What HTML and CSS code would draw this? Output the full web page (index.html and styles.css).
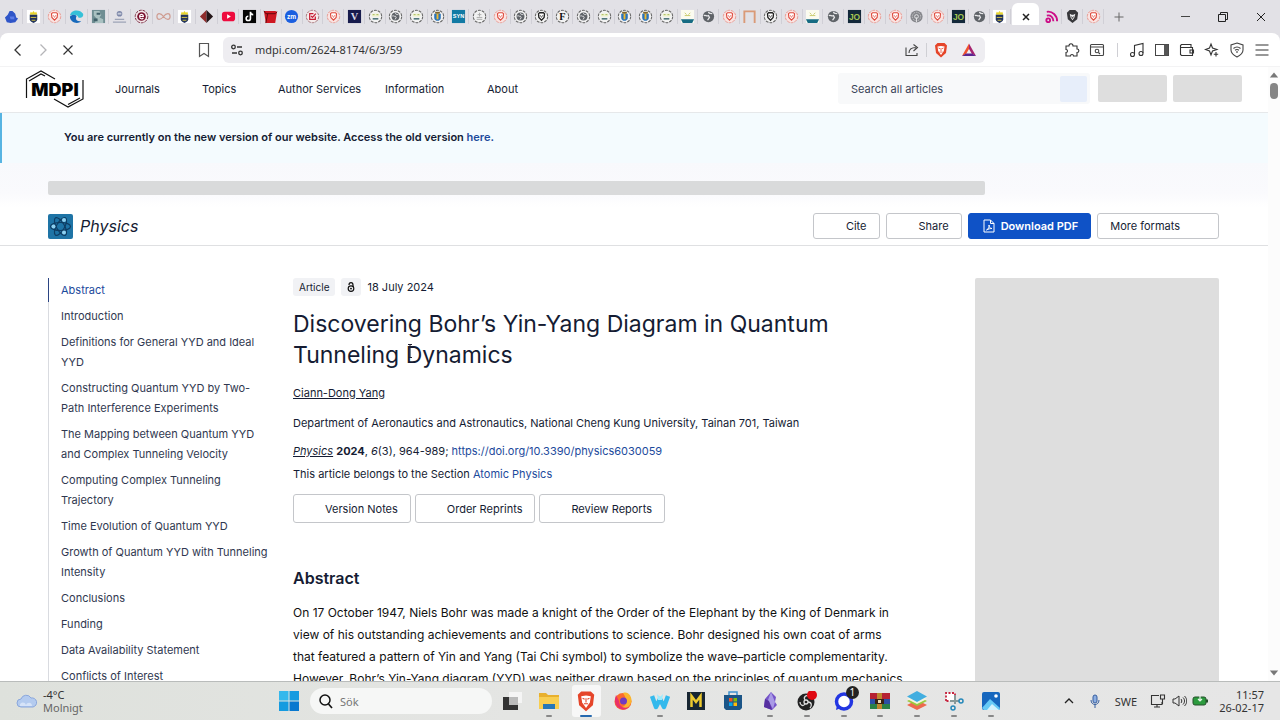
FILE: index.html
```html
<!DOCTYPE html>
<html lang="en">
<head>
  <meta charset="UTF-8">
  <meta name="viewport" content="width=device-width, initial-scale=1.0">
  <title>Discovering Bohr’s Yin-Yang Diagram in Quantum Tunneling Dynamics</title>
  <link rel="stylesheet" href="styles.css">
</head>
<body>
  <!-- Shared icons, 16x16 grid -->
  <svg class="sprite" aria-hidden="true">
    <symbol id="ring" viewBox="0 0 16 16"><circle cx="8" cy="8" r="6.6" fill="#f2f2f2" stroke="#666" stroke-width="1.1" stroke-dasharray="3 1.1"/></symbol>
    <symbol id="blob" viewBox="0 0 16 16"><path d="M1 9l3-3 2-4 3 0 3 3 1 4 2 1-3 4-5 1-4-1z" fill="#2f55c8"/><path d="M6 8h5v3H7z" fill="#5b7be6"/></symbol>
    <symbol id="police" viewBox="0 0 16 16"><path fill="#fff" d="M1 1h14v14H1z"/><path d="M4 6l1-3 1.500 1L8 2l1.500 2L11 3l1 3z" fill="#e8d52c"/><path d="M4 6h8v5c0 2-2 3-4 4-2-1-4-2-4-4z" fill="#23345c"/><path d="M5 9h6M6 12h4" stroke="#d5c443"/></symbol>
    <symbol id="lion-red" viewBox="0 0 16 16"><circle cx="8" cy="8" r="6.600" fill="#fae4e2" stroke="#e9958d" stroke-dasharray="3 1"/><path d="M4.800 5l1.200-1h4l1.200 1-.4 4L8 12 5.200 9z" fill="#fff" stroke="#df4b3e" stroke-width="1.200"/><path d="M6.500 6.500L8 9l1.500-2.500" fill="none" stroke="#df4b3e" stroke-width=".7"/></symbol>
    <symbol id="lion-black" viewBox="0 0 16 16"><use href="#ring"/><path d="M4.800 5l1.200-1h4l1.200 1-.4 4L8 12 5.200 9z" fill="#fff" stroke="#222" stroke-width="1.400"/><path d="M6.500 6.500L8 9l1.500-2.500" fill="none" stroke="#222" stroke-width=".7"/></symbol>
    <symbol id="wave" viewBox="0 0 16 16"><path d="M1 7C2 0 12 0 15 5c1 4-3 5-5 4 0-2-4-4-9-2z" fill="#35c1d8"/><path d="M1 8c3-3 7-2 7 0-2 3 1 6 5 5-4 4-12 1-12-5z" fill="#1769bb"/></symbol>
    <symbol id="portrait" viewBox="0 0 16 16"><path fill="#6f8e93" d="M1 1h14v14H1z"/><path d="M3 2h6l2 4-2 3 4 2v4H4l2-5-3-3z" fill="#a9c1c1"/><path d="M6 4h4v2H6zM3 10h4v3H3z" fill="#3f5f68"/></symbol>
    <symbol id="crest" viewBox="0 0 16 16"><circle cx="8" cy="5" r="3" fill="#7c86a8"/><path d="M6 4h4v2H6z" fill="#c5cad8"/><path d="M3 11h10M1 14h14" stroke="#9da4b7" stroke-width="1.200"/></symbol>
    <symbol id="e-ring" viewBox="0 0 16 16"><circle cx="8" cy="8" r="6.700" fill="#f3e7e9" stroke="#74223a" stroke-dasharray="3 1"/><circle cx="8" cy="8" r="4.600" fill="#7b1230"/><path d="M6 8h4c0-3-4-3-4 0s3 3 4 1.500" fill="none" stroke="#fff" stroke-width="1.200"/></symbol>
    <symbol id="loop" viewBox="0 0 16 16"><path d="M8 8C5 4 1 4 1 8s4 4 7 0 7-4 7 0-4 4-7 0z" fill="none" stroke="#cf9c91" stroke-width="1.300"/></symbol>
    <symbol id="diamond" viewBox="0 0 16 16"><path d="M8 1v14L1 8z" fill="#8f2c2c"/><path d="M8 1l7 7-7 7z" fill="#231518"/></symbol>
    <symbol id="play" viewBox="0 0 16 16"><rect x="1" y="3" width="14" height="10" rx="3" fill="#ee0b3e"/><path d="M6.500 5.500v5l4-2.500z" fill="#fff"/></symbol>
    <symbol id="note" viewBox="0 0 16 16"><path fill="#050505" d="M1 1h14v14H1z"/><path d="M9 3v7a2.300 2.300 0 1 1-2.300-2.300M9 3c0 2 1 3 3 3" fill="none" stroke="#fff" stroke-width="1.700"/></symbol>
    <symbol id="book" viewBox="0 0 16 16"><path d="M1 2h12l2 1-2 12H3z" fill="#cf1722"/><path d="M1 2l2 3h10l2-2M5 5L3 15" fill="none" stroke="#5e070c"/></symbol>
    <symbol id="zm" viewBox="0 0 16 16"><circle cx="8" cy="8" r="7" fill="#1b5fe0"/><text x="8" y="10.500" class="glyph glyph-s" fill="#fff">zm</text></symbol>
    <symbol id="check" viewBox="0 0 16 16"><circle cx="8" cy="8" r="6.600" fill="#f6ecec" stroke="#a06b70" stroke-dasharray="3 1"/><path d="M11 8v3H5V5h4M6.500 7.500L8 9l3.500-4" fill="none" stroke="#c81d33" stroke-width="1.300"/></symbol>
    <symbol id="v" viewBox="0 0 16 16"><path fill="#171b4d" d="M1 1h14v14H1z"/><text x="8" y="12" class="glyph glyph-serif" fill="#d9dae8">V</text></symbol>
    <symbol id="smile" viewBox="0 0 16 16"><use href="#ring"/><path d="M4 5h8v3H4z" fill="#edf3c8"/><path d="M5 6h2M9 6h2" stroke="#a6b45c"/><path d="M5 10.500h6" stroke="#2b5a5f" stroke-width="1.400"/></symbol>
    <symbol id="globe" viewBox="0 0 16 16"><circle cx="8" cy="8" r="6" fill="#5f6368"/><path d="M3 7c2-1 3 1 5 0l1 2-2 3M8 3c0 2 2 2 4 2" fill="none" stroke="#e8e8ea" stroke-width="1.400"/></symbol>
    <symbol id="globe-ring" viewBox="0 0 16 16"><use href="#ring"/><circle cx="8" cy="8" r="4.200" fill="#5f6368"/><path d="M4.500 7.500c2-.8 2 .8 3.500.2l.7 1.500-1.200 2M8 4.500c0 1.500 1.500 1.300 3 1.500" fill="none" stroke="#e8e8ea"/></symbol>
    <symbol id="city" viewBox="0 0 16 16"><use href="#ring"/><path d="M4.500 5h7v4.500c0 2-2 3-3.500 3s-3.500-1-3.500-3z" fill="#2a74bb"/><path d="M7 5h2v6H7z" fill="#f0b92d"/><path d="M5.500 3h5v2h-5z" fill="#7c652c"/></symbol>
    <symbol id="syn" viewBox="0 0 16 16"><path fill="#127aa4" d="M1 1h14v14H1z"/><text x="8" y="10" class="glyph glyph-xs" fill="#fff">SYN</text></symbol>
    <symbol id="statue" viewBox="0 0 16 16"><use href="#ring"/><path d="M8 4v4M5 9h6M5 11h6M6 6h4" stroke="#aaa"/></symbol>
    <symbol id="f-ring" viewBox="0 0 16 16"><use href="#ring"/><text x="8" y="11.500" class="glyph glyph-serif" fill="#111">F</text></symbol>
    <symbol id="harbor" viewBox="0 0 16 16"><path fill="#fbfbef" d="M1 1h14v14H1z"/><path d="M5 4l2 2M11 4L9 6M5 7h6" stroke="#c6ca69"/><path d="M1 11h14l-2 4H3z" fill="#166b83"/></symbol>
    <symbol id="frame" viewBox="0 0 16 16"><path d="M2.500 15V2.500h11V15" fill="none" stroke="#da9a77" stroke-width="2"/></symbol>
    <symbol id="jo" viewBox="0 0 16 16"><path fill="#13283a" d="M1 1h14v14H1z"/><text x="8" y="12" class="glyph" fill="#a3c653">JO</text></symbol>
    <symbol id="print" viewBox="0 0 16 16"><circle cx="8" cy="8" r="6.500" fill="#85868b"/><circle cx="8" cy="8" r="4.500" fill="none" stroke="#d5d5d8" stroke-dasharray="1 1"/><circle cx="8" cy="8" r="2" fill="none" stroke="#e5e5e8"/><path d="M8 9v5" stroke="#e5e5e8"/></symbol>
    <symbol id="cast" viewBox="0 0 16 16"><g fill="none" stroke="#cc0d86" stroke-width="2"><path d="M3 3c6-1 11 4 11 10M3 7c4-1 7 2 7 6"/><circle cx="4.500" cy="12" r="2"/></g></symbol>
    <symbol id="lion-dark" viewBox="0 0 16 16"><path d="M2 4l3-3h6l3 3-1 7-5 4-5-4z" fill="#37373a"/><path d="M5 5l2 1h2l2-1-1 4-2 3-2-3z" fill="#ececee"/><path d="M7 8l1 2 1-2" fill="none" stroke="#37373a"/></symbol>
    <symbol id="lion" viewBox="0 0 16 16"><path d="M2 3.500L4.500 1h7L14 3.500 13 11l-5 4.500L3 11z" fill="#e5452a"/><path d="M4.500 4.500L8 4l3.500.5-.7 4.500L8 13 5.200 9z" fill="#fff"/><path d="M5.500 6l1.500.7M10.500 6L9 6.700M8 6v3M6.500 10h3" fill="none" stroke="#e5452a" stroke-width=".8"/></symbol>
  </svg>

  <header class="tab-strip">
    <div class="tab-group pinned">
      <button class="tab" aria-label="Tab"><svg><use href="#blob"/></svg></button>
      <button class="tab" aria-label="Tab"><svg><use href="#police"/></svg></button>
      <button class="tab" aria-label="Tab"><svg><use href="#lion-red"/></svg></button>
      <button class="tab" aria-label="Tab"><svg><use href="#wave"/></svg></button>
      <button class="tab" aria-label="Tab"><svg><use href="#portrait"/></svg></button>
      <button class="tab" aria-label="Tab"><svg><use href="#crest"/></svg></button>
      <button class="tab" aria-label="Tab"><svg><use href="#e-ring"/></svg></button>
      <button class="tab" aria-label="Tab"><svg><use href="#loop"/></svg></button>
      <button class="tab" aria-label="Tab"><svg><use href="#police"/></svg></button>
      <button class="tab" aria-label="Tab"><svg><use href="#diamond"/></svg></button>
      <button class="tab" aria-label="Tab"><svg><use href="#play"/></svg></button>
      <button class="tab" aria-label="Tab"><svg><use href="#note"/></svg></button>
    </div>
    <div class="tab-group">
      <button class="tab" aria-label="Tab"><svg><use href="#book"/></svg></button>
      <button class="tab" aria-label="Tab"><svg><use href="#zm"/></svg></button>
      <button class="tab" aria-label="Tab"><svg><use href="#check"/></svg></button>
      <button class="tab" aria-label="Tab"><svg><use href="#lion-red"/></svg></button>
      <button class="tab" aria-label="Tab"><svg><use href="#v"/></svg></button>
      <button class="tab" aria-label="Tab"><svg><use href="#smile"/></svg></button>
      <button class="tab" aria-label="Tab"><svg><use href="#globe-ring"/></svg></button>
      <button class="tab" aria-label="Tab"><svg><use href="#smile"/></svg></button>
      <button class="tab" aria-label="Tab"><svg><use href="#city"/></svg></button>
      <button class="tab" aria-label="Tab"><svg><use href="#syn"/></svg></button>
      <button class="tab" aria-label="Tab"><svg><use href="#statue"/></svg></button>
      <button class="tab" aria-label="Tab"><svg><use href="#lion-red"/></svg></button>
      <button class="tab" aria-label="Tab"><svg><use href="#globe-ring"/></svg></button>
      <button class="tab" aria-label="Tab"><svg><use href="#lion-black"/></svg></button>
      <button class="tab" aria-label="Tab"><svg><use href="#f-ring"/></svg></button>
      <button class="tab" aria-label="Tab"><svg><use href="#globe-ring"/></svg></button>
      <button class="tab" aria-label="Tab"><svg><use href="#smile"/></svg></button>
      <button class="tab" aria-label="Tab"><svg><use href="#city"/></svg></button>
      <button class="tab" aria-label="Tab"><svg><use href="#city"/></svg></button>
      <button class="tab" aria-label="Tab"><svg><use href="#smile"/></svg></button>
      <button class="tab" aria-label="Tab"><svg><use href="#harbor"/></svg></button>
      <button class="tab" aria-label="Tab"><svg><use href="#globe"/></svg></button>
      <button class="tab" aria-label="Tab"><svg><use href="#lion-red"/></svg></button>
      <button class="tab" aria-label="Tab"><svg><use href="#frame"/></svg></button>
      <button class="tab" aria-label="Tab"><svg><use href="#lion-black"/></svg></button>
      <button class="tab" aria-label="Tab"><svg><use href="#lion-red"/></svg></button>
      <button class="tab" aria-label="Tab"><svg><use href="#harbor"/></svg></button>
      <button class="tab" aria-label="Tab"><svg><use href="#globe"/></svg></button>
      <button class="tab" aria-label="Tab"><svg><use href="#jo"/></svg></button>
      <button class="tab" aria-label="Tab"><svg><use href="#lion-red"/></svg></button>
      <button class="tab" aria-label="Tab"><svg><use href="#lion-red"/></svg></button>
      <button class="tab" aria-label="Tab"><svg><use href="#print"/></svg></button>
      <button class="tab" aria-label="Tab"><svg><use href="#lion-red"/></svg></button>
      <button class="tab" aria-label="Tab"><svg><use href="#jo"/></svg></button>
      <button class="tab" aria-label="Tab"><svg><use href="#globe"/></svg></button>
      <button class="tab" aria-label="Tab"><svg><use href="#police"/></svg></button>
    </div>
    <button class="tab-active" aria-label="Close tab"><svg viewBox="0 0 16 16"><path d="M5 5l6 6M11 5l-6 6" stroke="#222" stroke-width="1.500"/></svg></button>
    <div class="tab-group trailing">
      <button class="tab" aria-label="Tab"><svg><use href="#cast"/></svg></button>
      <button class="tab" aria-label="Tab"><svg><use href="#lion-dark"/></svg></button>
      <button class="tab" aria-label="Tab"><svg><use href="#lion-red"/></svg></button>
    </div>
    <button class="new-tab" aria-label="New tab"><svg viewBox="0 0 16 16"><path d="M8 3.500v9M3.500 8h9" stroke="#666"/></svg></button>
    <div class="window-controls">
      <button aria-label="Minimize"><svg viewBox="0 0 16 16"><path d="M4 7.500h9" stroke="#444"/></svg></button>
      <button aria-label="Restore"><svg viewBox="0 0 16 16"><path d="M3.500 5.500h7v7h-7zM5.500 5.500v-2h7v7h-2" fill="none" stroke="#222"/></svg></button>
      <button aria-label="Close"><svg viewBox="0 0 16 16"><path d="M4 4l8 8M12 4l-8 8" stroke="#222"/></svg></button>
    </div>
  </header>

  <div class="toolbar">
    <div class="nav-buttons">
      <button aria-label="Back"><svg viewBox="0 0 16 16"><path d="M10.500 2.500L5 8l5.500 5.500" fill="none" stroke="#333" stroke-width="1.300"/></svg></button>
      <button aria-label="Forward"><svg viewBox="0 0 16 16"><path d="M5.500 2.500L11 8l-5.500 5.500" fill="none" stroke="#b5b5b8" stroke-width="1.300"/></svg></button>
      <button aria-label="Stop"><svg viewBox="0 0 16 16"><path d="M3.500 3.500l9 9M12.500 3.500l-9 9" stroke="#333" stroke-width="1.200"/></svg></button>
    </div>
    <button class="bookmark" aria-label="Bookmark"><svg viewBox="0 0 16 16"><path d="M3.500 1.500h9v13L8 11.500l-4.500 3z" fill="none" stroke="#555" stroke-width="1.200"/></svg></button>
    <div class="address">
      <svg viewBox="0 0 16 16" aria-hidden="true"><g fill="none" stroke="#333" stroke-width="1.300"><circle cx="4.500" cy="5" r="1.800"/><path d="M8 5h5M3 11h5"/><circle cx="11.500" cy="11" r="1.800"/></g></svg>
      <input type="text" aria-label="Address" value="mdpi.com/2624-8174/6/3/59">
      <button aria-label="Share page"><svg viewBox="0 0 16 16"><path d="M2 5.500v8h11V11M5 11c0-4 3-5.500 7-5.500M9.500 2.500l4 3-4 3.500" fill="none" stroke="#444" stroke-width="1.100"/></svg></button>
      <span class="divider"></span>
      <button aria-label="Shields"><svg><use href="#lion"/></svg></button>
      <button aria-label="Rewards"><svg viewBox="0 0 16 16"><path d="M8 1.500L1 14l4-2 3-5z" fill="#f0522d"/><path d="M8 1.500L15 14l-4-2-3-5z" fill="#a6246f"/><path d="M1 14h14l-4-2.500H5z" fill="#5a2590"/></svg></button>
    </div>
    <div class="extensions">
      <button aria-label="Extensions"><svg viewBox="0 0 16 16"><path d="M2 4h3c0-3 4-3 4 0h4v3c2.500 0 2.500 3.500 0 3.500V14H9.500c0-2-3-2-3 0H2v-3.500c2 0 2-3 0-3z" fill="none" stroke="#333" stroke-width="1.100"/></svg></button>
      <button aria-label="Page search"><svg viewBox="0 0 16 16"><g fill="none" stroke="#444" stroke-width="1.100"><rect x="1.500" y="2.500" width="13" height="11" rx="1"/><path d="M1.500 5h13M9.500 10.500l1.500 1.500"/><circle cx="8" cy="9" r="1.800"/></g></svg></button>
    </div>
    <span class="divider"></span>
    <div class="tools">
      <button aria-label="Media"><svg viewBox="0 0 16 16"><g fill="none" stroke="#333" stroke-width="1.100"><path d="M5.500 12V3.500L14 1.500V11"/><circle cx="3.500" cy="12.500" r="2"/><circle cx="12" cy="11.500" r="2"/></g></svg></button>
      <button aria-label="Sidebar"><svg viewBox="0 0 16 16"><rect x="1.500" y="2.500" width="13" height="11" fill="none" stroke="#444"/><path d="M10 2.500h4.500v11H10z" fill="#555"/></svg></button>
      <button aria-label="Wallet"><svg viewBox="0 0 16 16"><path d="M1.500 5.500V3.500l1-1h9.500v3M1.500 5.500h12v8h-11l-1-1zM14.500 8H11v3h3.500z" fill="none" stroke="#333" stroke-width="1.100"/></svg></button>
      <button aria-label="Assistant"><svg viewBox="0 0 16 16"><path d="M7 2l1.500 4L13 7.500 8.500 9 7 13 5.500 9 1.500 7.500 5.500 6zM12 10v4.500M9.800 12.200h4.400" fill="none" stroke="#333" stroke-width="1.100"/></svg></button>
      <button aria-label="VPN"><svg viewBox="0 0 16 16"><path d="M8 1l6 2v5c0 3-2 5-6 7-4-2-6-4-6-7V3zM4.500 6.500c2-2 5-2 7 0M6 8.300c1.300-1 2.700-1 4 0M8 9v2" fill="none" stroke="#444" stroke-width="1.100"/></svg></button>
      <button aria-label="Menu"><svg viewBox="0 0 16 16"><path d="M1.500 3h13M1.500 8h13M1.500 13h13" stroke="#333" stroke-width="1.200"/></svg></button>
    </div>
  </div>

  <div class="viewport">
    <div class="page">
      <div class="site-header">
        <a class="logo" href="#" aria-label="MDPI">
          <svg viewBox="0 0 60 40"><g fill="none" stroke="#111" stroke-width="1.200"><path d="M1.500 29V10L16 2l14 8M4 12l12-7 4 2"/><path d="M29 30l14 8 15-8V11M55 29l-12 6.500"/></g><text x="30" y="27" class="logo-text">MDPI</text></svg>
        </a>
        <nav class="site-nav">
          <a href="#">Journals</a>
          <a href="#">Topics</a>
          <a href="#">Author Services</a>
          <a href="#">Information</a>
          <a href="#">About</a>
        </nav>
        <div class="search">
          <input type="text" aria-label="Search all articles" placeholder="Search all articles">
          <button aria-label="Search"></button>
        </div>
        <div class="skeleton account"></div>
        <div class="skeleton account"></div>
      </div>

      <div class="notice">You are currently on the new version of our website. Access the old version <a href="#">here.</a></div>
      <div class="breadcrumb"><div class="skeleton"></div></div>

      <div class="journal-bar">
        <svg class="journal-icon" viewBox="0 0 25 25" aria-hidden="true"><rect width="25" height="25" rx="2" fill="#1e74a6"/><g fill="none" stroke="#0e3d63" stroke-width="1.200"><ellipse cx="12.500" cy="12.500" rx="10" ry="4"/><ellipse cx="12.500" cy="12.500" rx="10" ry="4" transform="rotate(60 12.500 12.500)"/><ellipse cx="12.500" cy="12.500" rx="10" ry="4" transform="rotate(120 12.500 12.500)"/></g><g fill="#8ed0ef"><circle cx="5.500" cy="12.500" r="2"/><circle cx="16" cy="6" r="2"/><circle cx="16" cy="18.500" r="2"/></g></svg>
        <span class="journal-name">Physics</span>
        <div class="actions">
          <button class="btn icon-space">Cite</button>
          <button class="btn icon-space">Share</button>
          <button class="btn primary"><svg viewBox="0 0 12 14" aria-hidden="true"><path d="M1 1h6.500L11 4.500V13H1zM7.500 1v3.500H11M3.500 11c2-1 3-3 2.500-5 0 2 1 3.500 3 3.500-2 0-3.500.5-5.500 1.500" fill="none" stroke="#fff"/></svg>Download PDF</button>
          <button class="btn formats">More formats</button>
        </div>
      </div>

      <div class="content">
        <nav class="toc">
          <a class="current" href="#">Abstract</a>
          <a href="#">Introduction</a>
          <a href="#">Definitions for General YYD and Ideal YYD</a>
          <a href="#">Constructing Quantum YYD by Two-Path Interference Experiments</a>
          <a href="#">The Mapping between Quantum YYD and Complex Tunneling Velocity</a>
          <a href="#">Computing Complex Tunneling Trajectory</a>
          <a href="#">Time Evolution of Quantum YYD</a>
          <a href="#">Growth of Quantum YYD with Tunneling Intensity</a>
          <a href="#">Conclusions</a>
          <a href="#">Funding</a>
          <a href="#">Data Availability Statement</a>
          <a href="#">Conflicts of Interest</a>
        </nav>

        <main class="article">
          <div class="meta">
            <span class="badge">Article</span>
            <span class="badge access"><svg viewBox="0 0 10 14" role="img" aria-label="Open access"><g fill="none" stroke="#111" stroke-width="1.500"><circle cx="5" cy="9" r="3.500"/><path d="M2.500 4.500c0-4 5-4 5 0V7"/></g><circle cx="5" cy="9" r="1.200" fill="#111"/></svg></span>
            <span>18 July 2024</span>
          </div>
          <h1>Discovering Bohr’s Yin-Yang Diagram in Quantum Tunneling Dynamics</h1>
          <svg class="cursor" viewBox="0 0 6 14" aria-hidden="true"><path d="M1 .5h4M3 .5v13M1 13.500h4" stroke="#223"/></svg>
          <p class="author"><a href="#">Ciann-Dong Yang</a></p>
          <p class="affiliation">Department of Aeronautics and Astronautics, National Cheng Kung University, Tainan 701, Taiwan</p>
          <p class="citation"><a class="source" href="#">Physics</a> <b>2024</b>, <i>6</i>(3), 964-989; <a href="#">https://doi.org/10.3390/physics6030059</a></p>
          <p class="section">This article belongs to the Section <a href="#">Atomic Physics</a></p>
          <div class="article-actions">
            <button class="btn">Version Notes</button>
            <button class="btn">Order Reprints</button>
            <button class="btn">Review Reports</button>
          </div>
          <h2>Abstract</h2>
          <p class="abstract">On 17 October 1947, Niels Bohr was made a knight of the Order of the Elephant by the King of Denmark in view of his outstanding achievements and contributions to science. Bohr designed his own coat of arms that featured a pattern of Yin and Yang (Tai Chi symbol) to symbolize the wave–particle complementarity. However, Bohr’s Yin-Yang diagram (YYD) was neither drawn based on the principles of quantum mechanics</p>
        </main>

        <aside class="skeleton"></aside>
      </div>
    </div>
    <div class="scrollbar">
      <svg viewBox="0 0 12 8"><path d="M6 1l5 6H1z" fill="#777"/></svg>
      <span class="thumb"></span>
      <svg viewBox="0 0 12 8"><path d="M6 7L1 1h10z" fill="#777"/></svg>
    </div>
  </div>

  <footer class="taskbar">
    <button class="weather">
      <svg viewBox="0 0 22 16" aria-hidden="true"><path d="M5 14a4 4 0 0 1 0-8 5.500 5.500 0 0 1 10-1 4.600 4.600 0 0 1 2 9z" fill="#b4cbef" stroke="#8aa7dc"/><path d="M4 13c-1-4 5-5 6-1 1-3 6-3 6 1z" fill="#d6e3f8"/></svg>
      <span>-4°C<br><small>Molnigt</small></span>
    </button>
    <button class="start" aria-label="Start"><svg viewBox="0 0 20 20"><g fill="#159be0"><path fill="#35b8ec" d="M0 0h9.500v9.500H0z"/><path d="M10.500 0H20v9.500h-9.500zM0 10.500h9.500V20H0z"/><path fill="#0878cf" d="M10.500 10.500H20V20h-9.500z"/></g></svg></button>
    <label class="task-search">
      <svg viewBox="0 0 16 16" aria-hidden="true"><circle cx="7" cy="7" r="5" fill="none" stroke="#111" stroke-width="1.500"/><path d="M10.500 11l3.500 4" stroke="#111" stroke-width="1.600"/></svg>
      <input type="text" placeholder="Sök" aria-label="Sök">
    </label>
    <div class="apps">
      <button aria-label="Task view"><svg viewBox="0 0 20 20"><path fill="#f5f5f5" d="M7 1h13v11H7z"/><path fill="#333" d="M1 6h15v13H1z"/><path fill="#bbb" d="M7 6h9v8H7z"/></svg></button>
      <button class="open" aria-label="Files"><svg viewBox="0 0 20 20"><path d="M0 2h7l2 2h11v14H0z" fill="#e8b02e"/><path d="M0 6h20v12H0z" fill="#f8ce51"/><path d="M4 13h12v5H4z" fill="#2577b9"/></svg></button>
      <button class="open active" aria-label="Brave"><svg><use href="#lion"/></svg></button>
      <button aria-label="Firefox"><svg viewBox="0 0 20 20"><circle cx="10" cy="10.500" r="8.500" fill="#fb6b2d"/><path d="M10 2c5-2 9 3 8.500 9-3 7-9 9-14 5 8 2 12-5 5.500-14z" fill="#fbb52c"/><path d="M2 8c-1 9 8 14 14 8-6 2-10-1-10-6L3 4z" fill="#e93068"/><circle cx="10.500" cy="10" r="3.500" fill="#713ac0"/></svg></button>
      <button class="open" aria-label="W"><svg viewBox="0 0 20 20"><path d="M2 5l4 11 4-8 4 8 4-11" fill="none" stroke="#34b9ec" stroke-width="4.500" stroke-linejoin="round"/><path d="M7 3l3 3 3-3-1 6H8z" fill="#9cecff"/></svg></button>
      <button aria-label="M"><svg viewBox="0 0 20 20"><path fill="#182632" d="M1 1h18v18H1z"/><path d="M5.500 16V5l4.500 6 4.500-6v11" fill="none" stroke="#ecc92f" stroke-width="2.500"/></svg></button>
      <button aria-label="Store"><svg viewBox="0 0 20 20"><path d="M6 5V1h8v4" fill="none" stroke="#3f93cf" stroke-width="1.500"/><path d="M1 4h18v13l-2 2H3l-2-2z" fill="#1b5587"/><path d="M6 7h3.500v3.500H6z" fill="#f35325"/><path d="M10.500 7H14v3.500h-3.500z" fill="#81bc06"/><path d="M6 11.500h3.500V15H6z" fill="#05a6f0"/><path d="M10.500 11.500H14V15h-3.500z" fill="#ffba08"/></svg></button>
      <button class="open" aria-label="Obsidian"><svg viewBox="0 0 20 20"><path d="M11 1l5 5-1 5 2 3-5 5-8-3 1-8z" fill="#7554c8"/><path d="M11 1L8 9l5 9 2-7z" fill="#a99ae6"/><path d="M5 8l4 2 3 9-8-3z" fill="#5730a0"/></svg></button>
      <button class="open" aria-label="OBS"><svg viewBox="0 0 20 20"><circle cx="9" cy="11" r="8.500" fill="#222"/><g fill="none" stroke="#ddd" stroke-width="1.300"><circle cx="9" cy="11" r="2"/><path d="M8 9c-2-3 1-5 3-4M11 11c4 0 4 4 2 6M8 13c-2 3-5 1-5-2"/></g><circle cx="15" cy="4" r="5" fill="#e00912"/></svg></button>
      <button class="open" aria-label="Signal"><svg viewBox="0 0 20 20"><circle cx="10" cy="10.500" r="7.500" fill="#fff" stroke="#2336e2" stroke-width="3.500"/><path d="M3 14l-1 5 5-2z" fill="#2336e2"/></svg><span class="count">1</span></button>
      <button class="open" aria-label="WinRAR"><svg viewBox="0 0 20 20"><path d="M0 2h20v6H0z" fill="#b62132"/><path d="M0 8h20v5H0z" fill="#2b4fa5"/><path d="M0 13h20v5H0z" fill="#298047"/><path d="M7 2h5v16H7z" fill="#bf862e"/><path d="M5 8h9v5H5z" fill="#382314"/><path d="M8 9h3v3H8z" fill="#e5dab7"/></svg></button>
      <button class="open" aria-label="Layers"><svg viewBox="0 0 20 20"><path d="M10 9l10 5-10 5-10-5z" fill="#ed694e"/><path d="M10 5l10 5-10 5-10-5z" fill="#9bc93d"/><path d="M0 8l10 5 10-5-10-5z" fill="#f4f3df"/><path d="M10 0l10 5.500L10 11 0 5.500z" fill="#42aee0"/></svg></button>
      <button class="open" aria-label="Snipping Tool"><svg viewBox="0 0 20 20"><path d="M2 10V2h9v8z" fill="#fff" stroke="#c72741" stroke-width="1.800" stroke-dasharray="2 1.500"/><path d="M11 4v9M6 10h9" stroke="#899" stroke-width="2"/><g fill="none" stroke="#2588b9" stroke-width="1.500"><circle cx="17" cy="10" r="2"/><circle cx="9" cy="17" r="2"/></g></svg></button>
      <button class="open" aria-label="Photos"><svg viewBox="0 0 20 20"><rect x="1" y="1" width="18" height="18" rx="2" fill="#1767be"/><path d="M1 17l8-9 10 9-1 2H3z" fill="#66c9f6"/><path d="M6 19l5-6 7 6z" fill="#d3f1fc"/><circle cx="15" cy="5" r="1.800" fill="#fff"/></svg></button>
    </div>
    <div class="tray">
      <button aria-label="Hidden icons"><svg viewBox="0 0 16 16"><path d="M4 10l4-4 4 4" fill="none" stroke="#222" stroke-width="1.300"/></svg></button>
      <button aria-label="Microphone"><svg viewBox="0 0 16 16"><rect x="6" y="2" width="4" height="8" rx="2" fill="#8caee2" stroke="#375f9f"/><path d="M4 7c0 6 8 6 8 0M8 11.500V15" fill="none" stroke="#375f9f"/></svg></button>
      <span class="language">SWE</span>
      <div class="status-icons">
        <svg viewBox="0 0 16 16"><path d="M9 2.500H1.500v9H12V9M4 14h6M7 11.500V14M10.500 2h4v4h-4zM12.500 6v5" fill="none" stroke="#333" stroke-width="1.100"/></svg>
        <svg viewBox="0 0 16 16"><path d="M2 6h2l4-3v10l-4-3H2zM10 6c1 1 1 3 0 4M12 4.500c2 2 2 5 0 7M13.500 3c3 3 3 7 0 10" fill="none" stroke="#333"/></svg>
        <svg viewBox="0 0 16 16"><rect x="1" y="4" width="13" height="8" rx="2" fill="#2c9b3e" stroke="#24512b"/><path d="M15 6.500v3" stroke="#24512b" stroke-width="2"/><path d="M8 2v5M6 6l2 2 2-2" fill="none" stroke="#e8f6ea" stroke-width="1.200"/></svg>
      </div>
      <div class="clock">11:57<br>26-02-17</div>
    </div>
  </footer>
</body>
</html>
```
FILE: styles.css
```css
* {
  box-sizing: border-box;
}

body {
  margin: 0;
  height: 100vh;
  display: flex;
  flex-direction: column;
  overflow: hidden;
  background: #fff;
  font-family: "Noto Sans", sans-serif;
  font-size: 12px;
  color: #151c33;
}

a {
  color: inherit;
  text-decoration: none;
}

button, input {
  font: inherit;
  color: inherit;
  background: none;
  border: none;
  padding: 0;
  margin: 0;
  min-width: 0;
}

input:focus {
  outline: none;
}

svg {
  display: block;
  width: 16px;
  height: 16px;
  flex: none;
}

.sprite {
  display: none;
}

.glyph {
  font: bold 9px "Liberation Sans", sans-serif;
  text-anchor: middle;
}

.glyph-s {
  font-size: 7px;
}

.glyph-xs {
  font-size: 6px;
}

.glyph-serif {
  font: bold 11px "Liberation Serif", serif;
}

/* Browser tabs */
.tab-strip {
  display: flex;
  align-items: center;
  height: 33px;
  flex: none;
  padding-left: 1px;
  background: #e2e1e6;
}

.tab-group {
  display: flex;
  flex: 75 1 0;
  min-width: 0;
}

.tab-group.pinned {
  flex: 26 1 0;
}

.tab-group.trailing {
  flex: 0 0 63px;
}

.tab {
  flex: 1;
  display: flex;
  justify-content: center;
  border-right: 1px solid #d0cfd6;
}

.tab svg {
  width: 15px;
  height: 15px;
}

.tab-active {
  width: 27px;
  height: 27px;
  flex: none;
  margin: 0 2px 0 1px;
  display: grid;
  place-items: center;
  background: #fff;
  border-radius: 6px;
}

.new-tab {
  margin-left: 7px;
}

.window-controls {
  display: flex;
  gap: 22px;
  margin-left: 50px;
  padding-right: 11px;
}

/* Toolbar */
.toolbar {
  display: flex;
  align-items: center;
  height: 34px;
  flex: none;
  padding: 0 10px;
  background: #fff;
  border-radius: 8px 8px 0 0;
  box-shadow: 0 -8px 0 #e2e1e6;
  border-bottom: 1px solid #f3f3f4;
}

.nav-buttons {
  display: flex;
  gap: 9px;
}

.bookmark {
  margin-left: 120px;
}

.address {
  flex: 1;
  display: flex;
  align-items: center;
  height: 26px;
  margin-left: 11px;
  padding: 0 8px 0 6px;
  gap: 12px;
  background: #eeedf1;
  border-radius: 6px;
}

.address input {
  flex: 1;
  margin-left: -2px;
  font-size: 11px;
  color: #333;
}

.address .divider {
  margin: 0 -6px;
}

.divider {
  width: 1px;
  height: 14px;
  background: #cfcfd4;
}

.extensions {
  display: flex;
  gap: 9px;
  margin-left: 79px;
  margin-right: 12px;
}

.tools {
  display: flex;
  gap: 9px;
  margin-left: 11px;
}

/* Page */
.viewport {
  flex: 1;
  min-height: 0;
  display: flex;
  font-family: Inter, sans-serif;
}

.page {
  flex: 1;
  min-width: 0;
  display: flex;
  flex-direction: column;
  overflow: hidden;
}

.scrollbar {
  width: 12px;
  display: flex;
  flex-direction: column;
  align-items: center;
  padding: 4px 0;
  background: #fcfcfc;
}

.scrollbar svg {
  width: 10px;
  height: 8px;
}

.thumb {
  width: 8px;
  height: 16px;
  margin-top: 4px;
  margin-bottom: auto;
  border-radius: 4px;
  background: #858585;
}

.skeleton {
  background: #dedede;
  border-radius: 2px;
}

.site-header {
  display: flex;
  align-items: center;
  height: 46px;
  flex: none;
  padding: 0 26px 2px 25px;
  border-bottom: 1px solid #e6e8ea;
}

.logo svg {
  width: 60px;
  height: 40px;
}

.logo-text {
  font: 900 18px Inter, sans-serif;
  text-anchor: middle;
  stroke: #fff;
  stroke-width: 2px;
  paint-order: stroke;
}

.site-nav {
  display: grid;
  grid-template-columns: 87px 76px 107px 102px auto;
  margin-left: 30px;
  font-size: 11px;
}

.search {
  display: flex;
  align-items: center;
  width: 252px;
  height: 31px;
  margin-left: auto;
  margin-right: 2px;
  padding: 0 3px 0 13px;
  background: #f8f9fa;
  border-radius: 3px;
  font-size: 11px;
}

.search input {
  flex: 1;
}

.search input::placeholder {
  color: #3a4358;
}

.search button {
  width: 27px;
  height: 26px;
  background: #e7eefa;
  border-radius: 2px;
}

.account {
  width: 69px;
  height: 27px;
  margin-left: 6px;
}

.notice {
  flex: none;
  height: 50px;
  padding: 0 62px;
  border-left: 2px solid #57b4e2;
  background: #f4fbfe;
  line-height: 48px;
  font-size: 11px;
  font-weight: 600;
}

.notice a {
  color: #1c4a9c;
}

.breadcrumb {
  flex: none;
  padding: 18px 283px 12px 48px;
  background: linear-gradient(#f8f9fc, #fafafd 70%, #fff);
}

.breadcrumb .skeleton {
  height: 14px;
  background: #d9dadb;
}

.journal-bar {
  display: flex;
  align-items: center;
  height: 39px;
  flex: none;
  padding: 0 49px 0 48px;
  border-bottom: 1px solid #dfe0e2;
}

.journal-icon {
  width: 25px;
  height: 25px;
}

.journal-name {
  margin-left: 7px;
  font-size: 16px;
  font-style: italic;
}

.actions {
  display: flex;
  gap: 6px;
  margin-left: auto;
}

.btn {
  height: 26px;
  padding: 0 12px;
  border: 1px solid #c4c6ca;
  border-radius: 3px;
  background: #fff;
  font-size: 11px;
}

.icon-space {
  padding-left: 32px;
}

.primary {
  display: flex;
  align-items: center;
  gap: 6px;
  padding: 0 12px 0 14px;
  border-color: #0f52c6;
  background: #0f52c6;
  color: #fff;
  font-weight: 600;
}

.primary svg {
  width: 12px;
  height: 14px;
}

.formats {
  padding-right: 38px;
}

.content {
  display: grid;
  grid-template-columns: 225px minmax(0, 1fr) 244px;
  flex: 1;
  min-height: 0;
  padding: 32px 49px 0 48px;
}

.toc {
  display: flex;
  flex-direction: column;
  gap: 6px;
  height: 420px;
  border-left: 1px solid #d9dbe0;
  font-size: 11px;
  line-height: 20px;
  color: #303850;
}

.toc a {
  padding-left: 12px;
}

.toc .current {
  margin-left: -1px;
  padding-top: 2px;
  padding-bottom: 2px;
  margin-bottom: -2px;
  border-left: 1px solid #2b4483;
  color: #1c4a9c;
}

.article {
  position: relative;
  padding: 0 52px 0 20px;
  line-height: 20px;
  font-size: 11px;
}

.article p {
  margin: 0;
}

.meta {
  display: flex;
  align-items: center;
  gap: 6px;
  height: 18px;
}

.badge {
  padding: 0 6px;
  line-height: 18px;
  font-size: 10px;
  border-radius: 3px;
  background: #f1f2f5;
}

.access svg {
  width: 8px;
  height: 18px;
  padding: 3px 0;
}

h1 {
  margin: 13px 0 12px;
  font-size: 23px;
  line-height: 31px;
  font-weight: 400;
}

.cursor {
  position: absolute;
  left: 134px;
  top: 66px;
  width: 6px;
  height: 14px;
}

.author a, .source {
  text-decoration: underline;
}

.article .affiliation {
  margin-top: 10px;
}

.article .citation {
  margin-top: 8px;
}

.article .section {
  margin-top: 3px;
}

.citation a, .section a {
  color: #1c4a9c;
}

.citation .source {
  color: inherit;
  font-style: italic;
}

.article-actions {
  display: flex;
  gap: 4px;
  margin-top: 10px;
}

.article-actions .btn {
  height: 29px;
  padding-left: 31px;
}

h2 {
  margin: 43px 0 12px;
  font-size: 16px;
  line-height: 24px;
  font-weight: 600;
}

.article .abstract {
  padding-right: 18px;
  font-size: 12px;
  line-height: 22px;
  color: #111;
}

/* Taskbar */
.taskbar {
  display: flex;
  align-items: center;
  height: 39px;
  flex: none;
  padding: 0 16px;
  border-top: 1px solid #b9bcbb;
  background: linear-gradient(90deg, #dee1dc, #e4e5e3 40%, #e6e6e6);
  font-size: 11px;
  line-height: 13px;
  color: #333;
}

.weather {
  display: flex;
  align-items: center;
  gap: 5px;
  width: 263px;
  text-align: left;
}

.weather small {
  font-size: 11px;
  color: #666;
}

.weather svg {
  width: 22px;
  height: 16px;
}

.start svg {
  width: 20px;
  height: 20px;
}

.task-search {
  display: flex;
  align-items: center;
  gap: 6px;
  width: 182px;
  height: 26px;
  margin-left: 11px;
  padding: 0 8px;
  border-radius: 13px;
  background: #f6f7f6;
}

.task-search input {
  flex: 1;
}

.apps {
  flex: 1;
  display: flex;
  height: 100%;
  margin-left: 2px;
}

.apps button {
  position: relative;
  flex: 1;
  display: grid;
  place-items: center;
}

.apps svg {
  width: 20px;
  height: 20px;
}

.apps .open::after {
  content: "";
  position: absolute;
  bottom: 3px;
  left: calc(50% - 3px);
  width: 6px;
  height: 2px;
  border-radius: 1px;
  background: #888;
}

.apps .active {
  flex: 0 0 29px;
  margin: 3px 4px;
  border-radius: 3px;
  background: #f7f7f7;
}

.apps .active svg {
  width: 22px;
  height: 22px;
}

.apps .active::after {
  bottom: 0;
  left: calc(50% - 6px);
  width: 12px;
  background: #2668ae;
}

.count {
  position: absolute;
  top: 4px;
  right: 3px;
  width: 13px;
  height: 13px;
  border-radius: 50%;
  background: #222;
  color: #fff;
  font-size: 10px;
}

.tray {
  display: flex;
  align-items: center;
  width: 255px;
  padding-left: 52px;
  gap: 11px;
}

.language {
  margin-left: 2px;
}

.status-icons {
  display: flex;
  gap: 5px;
  margin-left: 2px;
}

.clock {
  margin-left: auto;
  text-align: right;
  white-space: nowrap;
}
```
